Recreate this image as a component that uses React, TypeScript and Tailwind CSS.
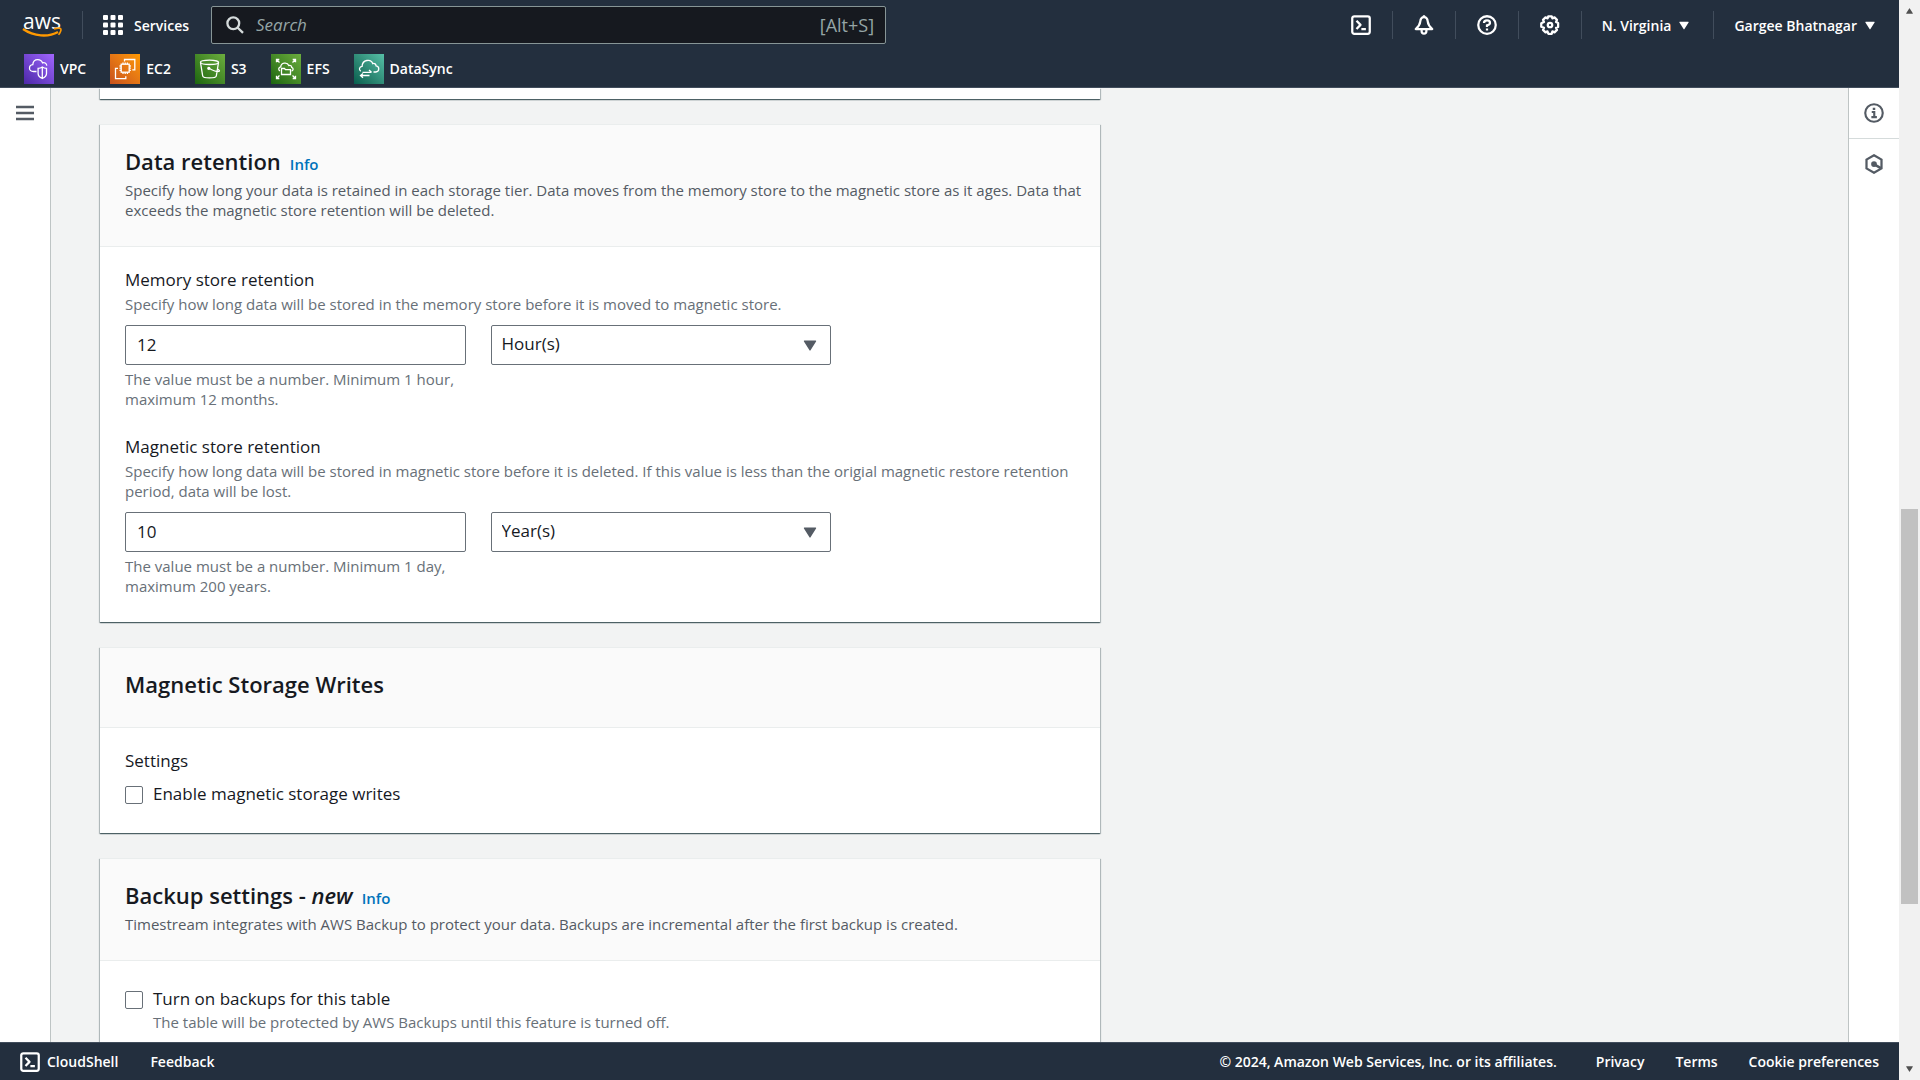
import type { ReactNode } from "react";

function TerminalIcon() {
  return (
    <svg viewBox="0 0 16 16" className="size-5" fill="none" stroke="currentColor" strokeWidth="1.8" strokeLinejoin="round" aria-hidden="true">
      <rect x="1" y="1" width="14" height="14" rx="1.6" />
      <path d="M4.4 4.6 7.6 7.9 4.4 11.2M8.3 11.2h3.6" />
    </svg>
  );
}

function BellIcon() {
  return (
    <svg viewBox="0 0 16 16" className="size-5" fill="none" stroke="currentColor" strokeWidth="1.8" strokeLinejoin="round" aria-hidden="true">
      <path d="M8 1.6C6.2 1.6 5.2 3.2 5 5.2 4.8 7.8 3.6 9.3 1.4 11.2h13.2C12.4 9.3 11.2 7.8 11 5.2 10.8 3.2 9.8 1.6 8 1.6Z" />
      <path d="M8 .2v1.6M6.1 11.4V13a1.9 1.9 0 0 0 3.8 0v-1.6" />
    </svg>
  );
}

function HelpIcon() {
  return (
    <svg viewBox="0 0 16 16" className="size-5" fill="none" stroke="currentColor" strokeWidth="1.8" aria-hidden="true">
      <circle cx="8" cy="8" r="7" />
      <path d="M5.6 6.4C5.6 5 6.6 4.3 8 4.3s2.4.8 2.4 2S9.4 7.8 8 8.3v1.3M8 10.7v1.7" />
    </svg>
  );
}

function GearIcon() {
  return (
    <svg viewBox="0 0 16 16" className="size-5" fill="none" stroke="currentColor" strokeWidth="1.8" strokeLinejoin="round" aria-hidden="true">
      <path d="M6.6 1h2.8l.5 1.7 1.7-.8 2 2-.8 1.7 1.7.8v3.2l-1.7.6.8 1.7-2 2-1.7-.8-.5 1.9H6.6L6 13.1l-1.6.8-2-2 .8-1.7L1 9.4V6.6l2.2-1-.8-1.7 2-2 1.7.8Z" />
      <circle cx="8" cy="8" r="1.8" />
    </svg>
  );
}

function InfoIcon() {
  return (
    <svg viewBox="0 0 16 16" className="size-5" fill="none" stroke="currentColor" strokeWidth="1.7" aria-hidden="true">
      <circle cx="8" cy="8" r="7" />
      <path d="M6.2 7.2h2v4M5.9 11.3h4.4M7 4.7h2" />
    </svg>
  );
}

function HexagonIcon() {
  return (
    <svg viewBox="0 0 16 16" className="size-5" fill="none" stroke="currentColor" strokeWidth="1.8" aria-hidden="true">
      <path d="M8 1 14 4.5v7L8 15 2 11.5v-7Z" />
      <path d="m8.5 8.5 5 2.8" strokeWidth="2" />
      <circle cx="8" cy="8" r="1.4" fill="currentColor" />
    </svg>
  );
}

function MenuIcon() {
  return (
    <svg viewBox="0 0 18 16" className="h-4 w-[18px]" fill="none" stroke="currentColor" strokeWidth="2.4" aria-hidden="true">
      <path d="M0 2h18M0 8h18M0 14h18" />
    </svg>
  );
}

function SearchIcon() {
  return (
    <svg viewBox="0 0 18 18" className="size-[18px] shrink-0 text-[#d5dbdb]" fill="none" stroke="currentColor" strokeWidth="2.3" aria-hidden="true">
      <circle cx="7.3" cy="7.3" r="5.9" />
      <path d="m11.5 11.5 5.5 5.3" />
    </svg>
  );
}

function Caret({ className }: { className: string }) {
  return (
    <svg viewBox="0 0 12 10" className={className} fill="currentColor" aria-hidden="true">
      <path d="M.9.5h10.2a.5.5 0 0 1 .4.8l-5 8a.6.6 0 0 1-1 0l-5-8a.5.5 0 0 1 .4-.8Z" />
    </svg>
  );
}

function GridIcon() {
  return (
    <svg viewBox="0 0 20 20" className="size-5" fill="currentColor" aria-hidden="true">
      {[0, 7.5, 15].map((y) => [0, 7.5, 15].map((x) => <rect key={`${x}-${y}`} x={x} y={y} width="5" height="5" rx="1" />))}
    </svg>
  );
}

function AwsLogo() {
  return (
    <span className="flex w-10 flex-col items-center pb-[2px]">
      <span className="-mb-1 text-[21px] leading-5 font-medium text-white">aws</span>
      <svg viewBox="0 0 40 11" className="h-[11px] w-10" fill="none" stroke="#ff9900" aria-hidden="true">
        <path d="M1 2C12 9.5 26 10.5 36 5" strokeWidth="2.4" />
        <path d="M32 2c3-.9 6-.9 6.7-.2s-.2 4-2.2 6" strokeWidth="1.6" />
      </svg>
    </span>
  );
}

const serviceGlyphs: Record<string, ReactNode> = {
  VPC: (
    <>
      <path d="M12.500 17.500h-3c-2.500 0-4-1.400-4-3.300 0-2.100 1.500-3.300 3.300-3.500.2-3.100 2.300-5 5-5 2.400 0 4 1.300 4.700 3.200 1.900-.8 3.900.3 4.300 2.800" />
      <path d="M18.300 13c1.500 1 2.800 1.300 4.200 1.300v5.200c0 2.500-1.700 4-4.200 5-2.500-1-4.200-2.500-4.200-5v-5.200c1.400 0 2.700-.3 4.200-1.300ZM18.300 13v11.500" />
    </>
  ),
  EC2: (
    <>
      <path d="M14.500 7.500v-2h10.300v10.300h-2.500M8 14.300H5.500v10.400h10.300v-2.400" />
      <rect x="11.2" y="10.2" width="8" height="8" />
      <path d="M13 8.500v1.700M15.200 8.500v1.700M17.400 8.500v1.700M13 18.200v1.700M15.200 18.200v1.700M17.400 18.200v1.700M9.500 12h1.700M9.500 14.200h1.700M9.500 16.400h1.700M19.200 12h1.700M19.200 14.200h1.700M19.200 16.400h1.700" />
    </>
  ),
  S3: (
    <>
      <ellipse cx="14.5" cy="8.3" rx="9" ry="2.2" />
      <path d="M5.500 8.500 7.700 22c.3 2.600 13.300 2.600 13.600 0l2.200-13.500M14 14.300c4.500 2.500 9 3.700 10.300 2.900.6-.5-.6-1.300-2-2" />
      <circle cx="13.8" cy="14.3" r="1" fill="currentColor" />
    </>
  ),
  EFS: (
    <>
      <path d="M5.500 8.300V5.500h2.800M21.700 5.500h2.800v2.800M24.500 21.700v2.800h-2.800M8.300 24.500H5.500v-2.800M5.500 5.500l3 3M24.500 5.500l-3 3M24.500 24.500l-3-3M5.500 24.500l3-3" />
      <path d="M9 17c-2-1.200-1.600-3.900.8-4.200.1-4 6.400-5.200 8-1.300 1.900-.5 2.900.5 2.900 1.900 2 .7 1.800 3.200-.1 3.600" />
      <path d="M10.500 20.500v-6h3l1 1.200h5v4.800Z" />
    </>
  ),
  DataSync: (
    <>
      <path d="M6.800 17.300c-2.300-1.500-1.500-4.800 1.300-5C8.300 5.500 17 4.500 18.700 9.600c2.100-.6 3.200.6 3.400 2.300 3.700.5 3.500 5.900-.3 6.100h-2.300" />
      <path d="M8.500 18.300h9M15 16l2.500 2.300M15.500 21.500h-9M9 23.800l-2.500-2.300 2.500-2" />
    </>
  ),
};

const services = [
  { name: "VPC", tile: "from-[#4d27a8] to-[#a166ff]" },
  { name: "EC2", tile: "from-[#c8511b] to-[#ff9900]" },
  { name: "S3", tile: "from-[#1b660f] to-[#6cae3e]" },
  { name: "EFS", tile: "from-[#1b660f] to-[#6cae3e]" },
  { name: "DataSync", tile: "from-[#055f4e] to-[#56c0a7]" },
];

function Divider() {
  return <span className="h-7 w-px shrink-0 bg-[#414d5c]" />;
}

function IconButton({ label, children }: { label: string; children: ReactNode }) {
  return (
    <button type="button" aria-label={label} className="px-[21px] py-2">
      {children}
    </button>
  );
}

function TopNav() {
  return (
    <header className="shrink-0 border-b border-[#414d5c] bg-[#232f3e] text-[14px] font-semibold text-white">
      <div className="flex items-center pt-[6px]">
        <a href="#home" aria-label="AWS home" className="mr-5 ml-[22px]">
          <AwsLogo />
        </a>
        <Divider />
        <button type="button" className="flex items-center gap-[11px] pr-[22px] pl-5">
          <GridIcon />
          Services
        </button>
        <label className="flex h-[38px] w-[675px] min-w-0 items-center gap-3 rounded-xs border border-[#879596] bg-[#16191f] pr-[11px] pl-[14px] font-normal">
          <SearchIcon />
          <input
            type="search"
            aria-label="Search"
            placeholder="Search"
            className="min-w-0 flex-1 bg-transparent text-[17px] outline-none placeholder:text-[#95a5a6] placeholder:italic"
          />
          <span className="text-[18px] text-[#95a5a6]">[Alt+S]</span>
        </label>
        <div className="ml-auto flex items-center">
          <IconButton label="CloudShell"><TerminalIcon /></IconButton>
          <Divider />
          <IconButton label="Notifications"><BellIcon /></IconButton>
          <Divider />
          <IconButton label="Help"><HelpIcon /></IconButton>
          <Divider />
          <IconButton label="Settings"><GearIcon /></IconButton>
          <Divider />
          <button type="button" className="flex items-center gap-2 pr-6 pl-5 whitespace-nowrap">
            N. Virginia
            <Caret className="h-[9px] w-[10px]" />
          </button>
          <Divider />
          <button type="button" className="flex items-center gap-2 pr-6 pl-5 whitespace-nowrap">
            Gargee Bhatnagar
            <Caret className="h-[9px] w-[10px]" />
          </button>
        </div>
      </div>
      <nav aria-label="Favorites" className="flex gap-6 pt-[10px] pb-[3px] pl-6">
        {services.map(({ name, tile }) => (
          <a key={name} href={`#${name.toLowerCase()}`} className="flex items-center gap-[6px] leading-[28px]">
            <span className={`size-[30px] bg-linear-to-tr ${tile}`}>
              <svg viewBox="0 0 30 30" className="size-[30px]" fill="none" stroke="currentColor" strokeWidth="1.3" aria-hidden="true">
                {serviceGlyphs[name]}
              </svg>
            </span>
            {name}
          </a>
        ))}
      </nav>
    </header>
  );
}

const cardClass = "bg-white shadow-[0_1px_1px_0_rgba(0,28,36,0.5),1px_1px_1px_0_rgba(0,28,36,0.2),-1px_1px_1px_0_rgba(0,28,36,0.2)]";

function Card({ title, info, description, children }: { title: ReactNode; info?: boolean; description?: string; children: ReactNode }) {
  return (
    <section className={cardClass}>
      <div className="border-y border-[#eaeded] bg-[#fafafa] pt-[22px] pr-4 pb-[26px] pl-[25px]">
        <div className="flex min-h-[31px] items-baseline gap-[9px]">
          <h2 className="text-[22px] leading-7 font-semibold">{title}</h2>
          {info && (
            <a href="#info" className="text-[15px] leading-5 font-semibold text-[#0073bb]">
              Info
            </a>
          )}
        </div>
        {description && <p className="mt-[2px] text-[15px] leading-5 text-[#545b64]">{description}</p>}
      </div>
      {children}
    </section>
  );
}

interface RetentionProps {
  id: string;
  label: string;
  description: string;
  value: string;
  unit: string;
  units: string[];
  hint: string;
}

function RetentionField({ id, label, description, value, unit, units, hint }: RetentionProps) {
  return (
    <div>
      <label htmlFor={id} className="block text-[17px] leading-[25px]">
        {label}
      </label>
      <p className="mt-[2px] text-[15px] leading-5 text-[#687078]">{description}</p>
      <div className="mt-[11px] grid max-w-[706px] grid-cols-2 gap-x-[25px] gap-y-1">
        <input
          id={id}
          defaultValue={value}
          inputMode="numeric"
          className="h-10 w-full rounded-xs border border-[#687078] px-[11px] pb-[2px] text-[17px] outline-none"
        />
        <div className="relative">
          <select
            aria-label={`${label} unit`}
            defaultValue={unit}
            className="h-10 w-full appearance-none rounded-xs border border-[#687078] bg-white px-[10px] pb-[2px] text-[17px] outline-none"
          >
            {units.map((u) => (
              <option key={u}>{u}</option>
            ))}
          </select>
          <Caret className="pointer-events-none absolute top-[15px] right-[14px] h-[11px] w-[14px] text-[#545b64]" />
        </div>
        <p className="text-[15px] leading-5 text-[#687078]">{hint}</p>
      </div>
    </div>
  );
}

function Checkbox({ id, label, description }: { id: string; label: string; description?: string }) {
  return (
    <div className="flex gap-[10px]">
      <input id={id} type="checkbox" className="mt-[5px] size-[18px] shrink-0 appearance-none rounded-xs border border-[#687078] bg-white" />
      <div>
        <label htmlFor={id} className="block text-[17px] leading-[25px]">
          {label}
        </label>
        {description && <p className="mt-[1px] text-[15px] leading-5 text-[#687078]">{description}</p>}
      </div>
    </div>
  );
}

function Footer() {
  return (
    <footer className="flex h-[38px] shrink-0 items-center border-t border-[#414d5c] bg-[#232f3e] px-5 text-[14px] font-semibold whitespace-nowrap text-white">
      <button type="button" className="flex items-center gap-[7px]">
        <TerminalIcon />
        CloudShell
      </button>
      <a href="#feedback" className="ml-8">Feedback</a>
      <div className="ml-auto flex gap-[31px]">
        <span className="mr-2">© 2024, Amazon Web Services, Inc. or its affiliates.</span>
        <a href="#privacy">Privacy</a>
        <a href="#terms">Terms</a>
        <a href="#cookies">Cookie preferences</a>
      </div>
    </footer>
  );
}

function ScrollBar() {
  return (
    <div aria-hidden="true" className="flex w-[21px] shrink-0 flex-col items-center justify-between bg-[#f1f1f1] py-2 text-[#505050]">
      <Caret className="h-[6px] w-[9px] rotate-180" />
      <div className="flex min-h-0 w-full flex-1 flex-col px-[2px]">
        <div className="grow-[495]" />
        <div className="grow-[395] bg-[#c1c1c1]" />
        <div className="grow-[162]" />
      </div>
      <Caret className="h-[6px] w-[9px]" />
    </div>
  );
}

const units = ["Hour(s)", "Day(s)", "Week(s)", "Month(s)", "Year(s)"];

export default function App() {
  return (
    <div className="flex h-screen font-['Open_Sans','Noto_Sans',sans-serif] text-[#16191f]">
      <div className="flex min-w-0 flex-1 flex-col">
        <TopNav />
        <div className="flex min-h-0 flex-1 bg-[#f2f3f3]">
          <aside className="flex w-[51px] shrink-0 flex-col items-center border-r border-[#bec4c4] bg-white pt-[17px] text-[#545b64]">
            <button type="button" aria-label="Open navigation">
              <MenuIcon />
            </button>
          </aside>
          <main className="min-w-0 flex-1 overflow-hidden px-[49px]">
            <div className="flex max-w-[1000px] flex-col gap-[25px]">
              <section className={`h-[11px] ${cardClass}`} />
              <Card
                title="Data retention"
                info
                description="Specify how long your data is retained in each storage tier. Data moves from the memory store to the magnetic store as it ages. Data that exceeds the magnetic store retention will be deleted."
              >
                <div className="flex flex-col gap-[25px] px-[25px] pt-5 pb-[26px]">
                  <RetentionField
                    id="memory"
                    label="Memory store retention"
                    description="Specify how long data will be stored in the memory store before it is moved to magnetic store."
                    value="12"
                    unit="Hour(s)"
                    units={units}
                    hint="The value must be a number. Minimum 1 hour, maximum 12 months."
                  />
                  <RetentionField
                    id="magnetic"
                    label="Magnetic store retention"
                    description="Specify how long data will be stored in magnetic store before it is deleted. If this value is less than the origial magnetic restore retention period, data will be lost."
                    value="10"
                    unit="Year(s)"
                    units={units}
                    hint="The value must be a number. Minimum 1 day, maximum 200 years."
                  />
                </div>
              </Card>
              <Card title="Magnetic Storage Writes">
                <fieldset className="px-[25px] pt-5 pb-[27px]">
                  <legend className="float-left mb-2 w-full text-[17px] leading-[25px]">Settings</legend>
                  <div className="clear-both">
                    <Checkbox id="enable-writes" label="Enable magnetic storage writes" />
                  </div>
                </fieldset>
              </Card>
              <Card
                title={<>Backup settings - <em>new</em></>}
                info
                description="Timestream integrates with AWS Backup to protect your data. Backups are incremental after the first backup is created."
              >
                <div className="px-[25px] py-[25px]">
                  <Checkbox
                    id="backups"
                    label="Turn on backups for this table"
                    description="The table will be protected by AWS Backups until this feature is turned off."
                  />
                </div>
              </Card>
            </div>
          </main>
          <aside className="flex w-[51px] shrink-0 flex-col border-l border-[#bec4c4] bg-white text-[#545b64]">
            <button type="button" aria-label="Info panel" className="flex h-[51px] items-center justify-center border-b border-[#d5dbdb]">
              <InfoIcon />
            </button>
            <button type="button" aria-label="Resources panel" className="flex h-[50px] items-center justify-center">
              <HexagonIcon />
            </button>
          </aside>
        </div>
        <Footer />
      </div>
      <ScrollBar />
    </div>
  );
}
